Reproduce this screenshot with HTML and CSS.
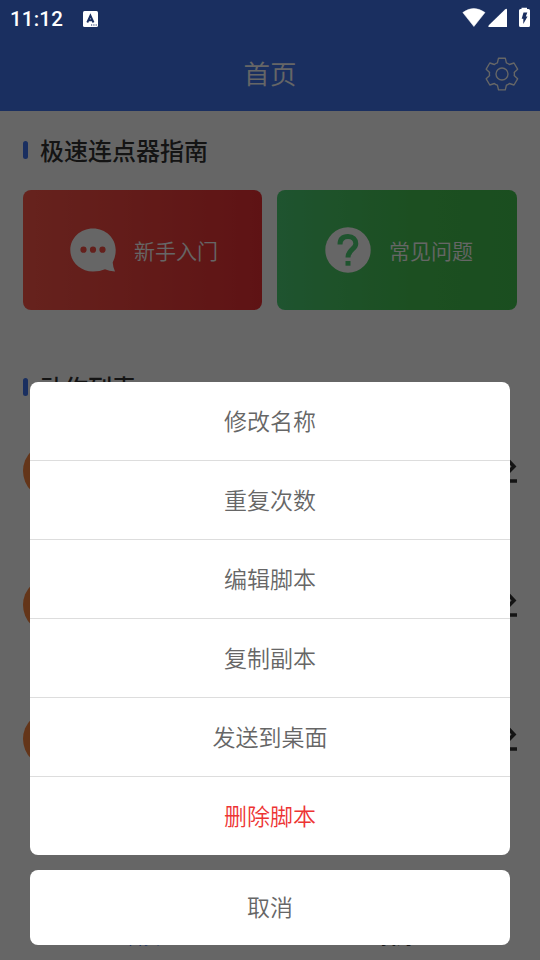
FILE: index.html
```html
<!DOCTYPE html>
<html lang="zh-CN">
<head>
<meta charset="utf-8">
<title>首页</title>
<link rel="stylesheet" href="styles.css">
</head>
<body>
<div class="app">
  <header class="header">
    <h1 class="header-title">首页</h1>
    <svg class="gear" viewBox="0 0 34 34" fill="none" stroke="currentColor" stroke-width="1.35" stroke-linejoin="round">
      <path d="M13.500 1.200H20.300L21.400 5.800Q22.800 6.200 24.400 7.500L29 6L32.600 12.200L29.200 15.400Q29.600 17 29.200 18.600L32.600 21.800L29 28L24.400 26.500Q22.800 27.800 21.400 28.200L20.300 32.800H13.500L12.400 28.200Q10.800 27.800 9.400 26.500L4.800 28L1.200 21.800L4.600 18.600Q4.200 17 4.600 15.400L1.200 12.200L4.800 6L9.400 7.500Q10.800 6.200 12.400 5.800Z"/>
      <circle cx="17" cy="17" r="6"/>
    </svg>
  </header>
  <main class="content">
    <h2 class="section-title">极速连点器指南</h2>
    <div class="cards">
      <div class="card card-red">
        <svg class="card-icon" viewBox="0 0 46 46">
          <path fill="currentColor" d="M23 1.500C10.400 1.500.3 11 .3 23S10.400 44.500 23 44.500Q30 44.500 35 42.200Q39 43.900 45 44.500Q43 40.500 42.700 35.500Q45.700 30 45.700 23C45.700 11 35.600 1.500 23 1.500Z"/>
          <g fill="#fa5047"><circle cx="13.500" cy="22.700" r="3.100"/><circle cx="23" cy="22.700" r="3.100"/><circle cx="32.500" cy="22.700" r="3.100"/></g>
        </svg>
        <span>新手入门</span>
      </div>
      <div class="card card-green">
        <svg class="card-icon" viewBox="0 0 46 46">
          <circle cx="23" cy="23" r="22.700" fill="currentColor"/>
          <path d="M15 17.500C15 12 18 9.500 23 9.500S30.800 12.500 30.800 16.700C30.800 22.200 23 22.500 23 30.500" fill="none" stroke="#4ed177" stroke-width="5"/>
          <rect x="20.500" y="34" width="5" height="4.700" fill="#4ed177"/>
        </svg>
        <span>常见问题</span>
      </div>
    </div>
    <h2 class="section-title actions-title">动作列表</h2>
    <div class="actions">
      <div class="action"><span class="avatar"></span><svg class="edit" viewBox="0 0 26 28" fill="none" stroke="currentColor" stroke-width="3.500"><path d="M3 22V15L15 3L23 11.500L15 19.500H3M12 26H26"/></svg></div>
      <div class="action"><span class="avatar"></span><svg class="edit" viewBox="0 0 26 28" fill="none" stroke="currentColor" stroke-width="3.500"><path d="M3 22V15L15 3L23 11.500L15 19.500H3M12 26H26"/></svg></div>
      <div class="action"><span class="avatar"></span><svg class="edit" viewBox="0 0 26 28" fill="none" stroke="currentColor" stroke-width="3.500"><path d="M3 22V15L15 3L23 11.500L15 19.500H3M12 26H26"/></svg></div>
    </div>
  </main>
  <nav class="tabs"><span class="tab tab-active">首页</span><span class="tab">我的</span></nav>
</div>
<div class="overlay">
  <div class="status">
    <span class="clock">11:12</span>
    <svg class="notice" viewBox="0 0 15 16">
      <rect width="15" height="16" rx="1.500" fill="#fff"/>
      <path d="M4.300 11.500L7.400 4.500L10.500 11.500M5.500 9.200H9.300" fill="none" stroke="#1a2f60" stroke-width="1.900"/>
      <path d="M8 14H9.200M10.300 14H11.500M12.600 14H13.800" stroke="#1a2f60" stroke-width="1.200"/>
    </svg>
    <svg class="system" viewBox="0 0 70 22" fill="#fff">
      <path d="M.8 5.500Q11.600-2.500 23 5.500L11.900 19.500Z" stroke="#fff" stroke-width=".5" stroke-linejoin="round"/>
      <path d="M26.500 20Q26 19 27 18L43 2.500Q45 1 45 3V20Z"/>
      <path d="M59.500 2V.8H65V2H66.500Q68 2 68 3.500V18.500Q68 20 66.500 20H58.500Q57 20 57 18.500V3.500Q57 2 58.500 2Z"/>
      <path d="M61.500 5.500H65.300L63.800 9.500H65.500L61.300 17V11.800H59.700Z" fill="#1a2f60"/>
    </svg>
  </div>
  <div class="sheet">
    <div class="menu">
      <div class="item">修改名称</div>
      <div class="item">重复次数</div>
      <div class="item">编辑脚本</div>
      <div class="item">复制副本</div>
      <div class="item">发送到桌面</div>
      <div class="item item-danger">删除脚本</div>
    </div>
    <div class="cancel">取消</div>
  </div>
</div>
</body>
</html>
```
FILE: styles.css
```css
* { box-sizing: border-box; }
body {
  margin: 0;
  width: 540px;
  height: 960px;
  position: relative;
  overflow: hidden;
  font-family: "Noto Sans CJK SC", sans-serif;
  font-weight: 350;
  background: #fff;
}
h1, h2 { margin: 0; }
.app { height: 960px; display: flex; flex-direction: column; }
.header {
  height: 111px;
  flex: none;
  padding: 37px 21px 0;
  background: #4176f0;
  color: #fff;
  display: grid;
  grid-template-columns: 34px 1fr 34px;
  align-items: center;
}
.header-title { grid-column: 2; font-size: 26.5px; font-weight: 350; text-align: center; line-height: 38px; padding-bottom: 2px; }
.gear { width: 34px; height: 34px; margin-top: -1px; }
.content { flex: 1; min-height: 0; padding: 20px 23px 0; overflow: hidden; }
.section-title {
  height: 38px;
  display: flex;
  align-items: center;
  gap: 12px;
  color: #333;
  font-size: 24px;
  font-weight: 500;
  line-height: 38px;
}
.section-title::before { content: ""; width: 5px; height: 18px; border-radius: 2.5px; background: #4176f0; }
.cards { display: grid; grid-template-columns: 239px 240px; gap: 15px; margin-top: 21px; }
.card {
  height: 120px;
  border-radius: 8px;
  display: flex;
  align-items: center;
  justify-content: center;
  gap: 18px;
  padding-left: 3px;
  color: #fff;
  font-size: 21px;
}
.card-icon { width: 46px; height: 46px; margin-top: -1px; }
.card-red { background: linear-gradient(90deg, #ff574a, #ec3034); }
.card-green { background: linear-gradient(90deg, #4ed177, #47c654 55%, #43c24f); padding-left: 4px; }
.actions-title { margin-top: 58px; }
.actions { margin-top: 30px; }
.action { height: 134px; display: flex; justify-content: space-between; align-items: flex-start; padding-top: 7px; }
.avatar { width: 56px; height: 56px; border-radius: 50%; background: #fa8540; }
.edit { width: 26px; height: 28px; margin-top: 12px; color: #333; }
.tabs { display: grid; grid-template-columns: 1fr 1fr; height: 52px; padding: 17px 17px 0; flex: none; font-size: 16.5px; font-weight: 400; line-height: 24px; text-align: center; color: #333; }
.tab-active { color: #4176f0; }
.overlay { position: absolute; inset: 0; background: rgba(0, 0, 0, .6); display: flex; flex-direction: column; justify-content: space-between; }
.status { height: 37px; display: flex; align-items: center; padding: 0 8px 0 10px; color: #fff; }
.clock { font: 500 20.5px/37px Roboto, sans-serif; letter-spacing: .2px; width: 73px; padding-top: 1px; }
.notice { width: 15px; height: 16px; }
.system { width: 70px; height: 22px; margin-left: auto; margin-top: -1px; }
.sheet { padding: 0 30px 15px; color: #666; font-size: 23px; text-align: center; }
.menu, .cancel { background: #fff; border-radius: 8px; }
.item { height: 79px; line-height: 76px; border-bottom: 1px solid #ddd; }
.item:last-child { height: 78px; border-bottom: 0; }
.item-danger { color: #ed3434; }
.cancel { height: 75px; line-height: 73px; margin-top: 15px; }
```
